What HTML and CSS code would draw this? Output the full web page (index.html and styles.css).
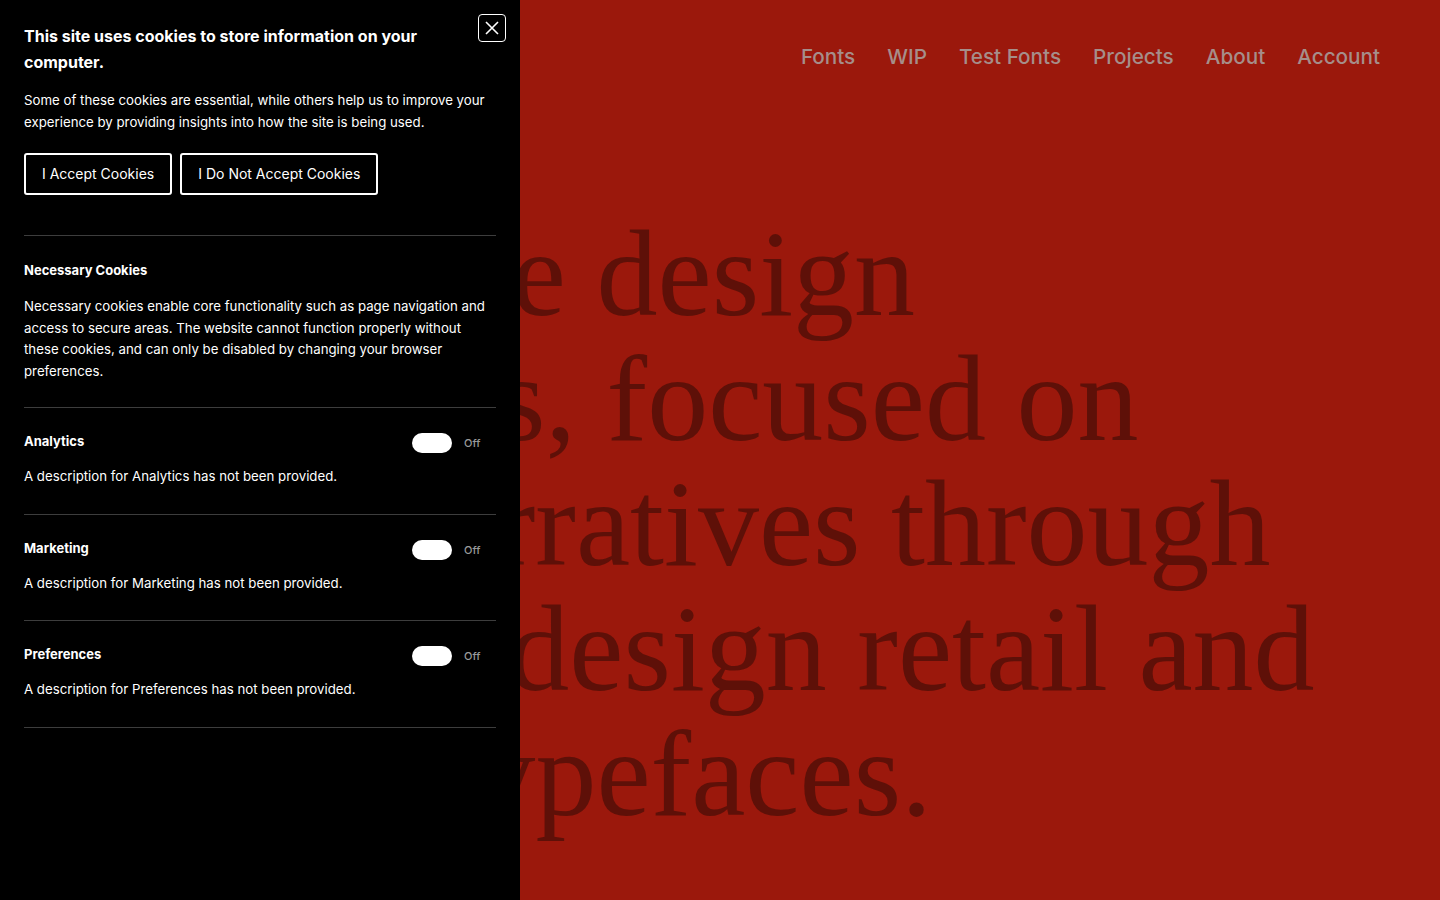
FILE: index.html
```html
<!DOCTYPE html>
<html lang="en">
<head>
<meta charset="utf-8">
<title>Cookies</title>
<link rel="stylesheet" href="styles.css">
</head>
<body>
<div class="page">
  <header class="site-header">
    <nav class="nav">
      <a href="#">Fonts</a>
      <a href="#">WIP</a>
      <a href="#">Test Fonts</a>
      <a href="#">Projects</a>
      <a href="#">About</a>
      <a href="#">Account</a>
    </nav>
  </header>
  <main class="hero">
    <h1 class="hero-title">
      <span class="line">We curate design</span>
      <span class="line">platforms, focused on</span>
      <span class="line">smart narratives through</span>
      <span class="line">bespoke design retail and</span>
      <span class="line">unique typefaces.</span>
    </h1>
  </main>
</div>

<aside class="cookie-panel">
  <div class="cp-head">
    <h2 class="cp-title">This site uses cookies to store information on your computer.</h2>
    <button class="cp-close" aria-label="Close">
      <svg width="16" height="16" viewBox="0 0 16 16"><path d="M2 2 L14 14 M14 2 L2 14" stroke="#fff" stroke-width="1.6" fill="none"/></svg>
    </button>
  </div>
  <p class="cp-intro">Some of these cookies are essential, while others help us to improve your experience by providing insights into how the site is being used.</p>
  <div class="cp-actions">
    <button class="cp-btn">I Accept Cookies</button>
    <button class="cp-btn">I Do Not Accept Cookies</button>
  </div>

  <section class="cp-section first">
    <h3 class="cp-sec-title">Necessary Cookies</h3>
    <p class="cp-text spaced">Necessary cookies enable core functionality such as page navigation and access to secure areas. The website cannot function properly without these cookies, and can only be disabled by changing your browser preferences.</p>
  </section>
  <section class="cp-section">
    <div class="cp-row">
      <h3 class="cp-sec-title">Analytics</h3>
      <div class="cp-toggle"><span class="switch"></span><span class="off">Off</span></div>
    </div>
    <p class="cp-text">A description for Analytics has not been provided.</p>
  </section>
  <section class="cp-section">
    <div class="cp-row">
      <h3 class="cp-sec-title">Marketing</h3>
      <div class="cp-toggle"><span class="switch"></span><span class="off">Off</span></div>
    </div>
    <p class="cp-text">A description for Marketing has not been provided.</p>
  </section>
  <section class="cp-section">
    <div class="cp-row">
      <h3 class="cp-sec-title">Preferences</h3>
      <div class="cp-toggle"><span class="switch"></span><span class="off">Off</span></div>
    </div>
    <p class="cp-text">A description for Preferences has not been provided.</p>
  </section>
</aside>
</body>
</html>
```
FILE: styles.css
```css
* { box-sizing: border-box; }
html, body { margin: 0; padding: 0; }
body {
  width: 1440px;
  height: 900px;
  overflow: hidden;
  background: #9b180c;
  font-family: Inter, "Noto Sans", sans-serif;
}
.page { height: 900px; }
.site-header {
  display: flex;
  justify-content: flex-end;
  padding: 45px 60px 0 0;
}
.nav { display: flex; gap: 32px; }
.nav a {
  color: #a68e8a;
  text-decoration: none;
  font-size: 20.7px;
  line-height: 24px;
  font-weight: 500;
}
.hero { padding-left: 78px; margin-top: 142px; }
.hero-title {
  margin: 0;
  font-family: "Liberation Serif", "Times New Roman", serif;
  font-weight: 400;
  font-size: 122px;
  line-height: 125px;
  color: #5e1008;
  white-space: nowrap;
}
.hero-title .line { display: block; }

.cookie-panel {
  position: fixed;
  left: 0;
  top: 0;
  width: 520px;
  height: 900px;
  background: #000;
  color: #fff;
  padding: 23px 24px 0 24px;
}
.cp-head {
  display: flex;
  justify-content: space-between;
  align-items: flex-start;
}
.cp-title {
  margin: 0;
  width: 420px;
  font-size: 16px;
  line-height: 26px;
  font-weight: 700;
}
.cp-close {
  margin: -9px -10px 0 0;
  width: 28px;
  height: 28px;
  border: 1px solid #fff;
  border-radius: 4px;
  background: transparent;
  display: flex;
  align-items: center;
  justify-content: center;
  padding: 0;
}
.cp-intro {
  margin: 14px 0 0 0;
  font-size: 13.25px;
  line-height: 22px;
}
.cp-actions {
  display: flex;
  gap: 8px;
  margin-top: 20px;
  padding-bottom: 40px;
  border-bottom: 1px solid #3d3d3d;
}
.cp-btn {
  height: 42px;
  padding: 0 16px 2px;
  background: transparent;
  color: #fff;
  border: 2px solid #fff;
  border-radius: 3px;
  font-family: inherit;
  font-size: 14px;
}
.cp-section {
  padding: 24px 0 26px;
  border-bottom: 1px solid #3d3d3d;
}
.cp-section.first { padding-bottom: 25px; }
.cp-sec-title {
  margin: 0;
  font-size: 13px;
  line-height: 20px;
  font-weight: 700;
}
.cp-row {
  display: flex;
  justify-content: space-between;
  align-items: flex-start;
}
.cp-row .cp-sec-title { margin-top: -1px; }
.cp-toggle {
  display: flex;
  align-items: center;
  gap: 12px;
  width: 84px;
  margin-top: 1px;
}
.switch {
  flex: none;
  width: 40px;
  height: 20px;
  border-radius: 10px;
  background: #fff;
}
.off { font-size: 11px; line-height: 14px; color: #9a9a9a; font-weight: 500; }
.cp-text {
  margin: 13px 0 0 0;
  font-size: 13.25px;
  line-height: 21.5px;
}
.cp-text.spaced { margin-top: 16px; }
```
